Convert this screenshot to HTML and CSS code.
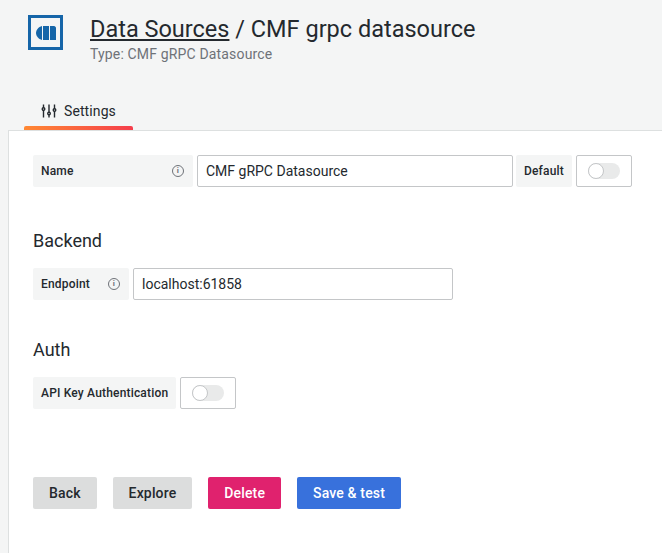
FILE: index.html
```html
<!DOCTYPE html>
<html lang="en">

<head>
    <meta charset="UTF-8">
    <title>CMF grpc datasource</title>
    <link rel="stylesheet" href="styles.css">
</head>

<body>
    <div class="header">
        <div class="header-top">
            <div class="logo">
                <svg width="20" height="14" viewBox="0 0 20 14">
                    <path d="M6 0C2.500 1 0 4 0 7s2.500 6 6 7z" fill="#1565a8"/>
                    <rect x="7" y="0" width="6" height="14" fill="#1565a8"/>
                    <path d="M14 0h4c1 0 2 1 2 2v12h-6z" fill="#1565a8"/>
                </svg>
            </div>
            <div class="titles">
                <h1 class="title"><a class="title-link" href="#">Data Sources</a> / CMF grpc datasource</h1>
                <div class="subtitle">Type: CMF gRPC Datasource</div>
            </div>
        </div>
        <div class="tab">
            <div class="tab-inner">
                <svg width="16" height="16" viewBox="0 0 16 16" fill="none" stroke="#24292e" stroke-width="1.4">
                    <path d="M2.500 1.500v13M8 1.500v13M13.500 1.500v13"/>
                    <circle cx="2.500" cy="6" r="1.300" fill="#f4f5f5"/>
                    <circle cx="8" cy="10.500" r="1.300" fill="#f4f5f5"/>
                    <circle cx="13.500" cy="7" r="1.300" fill="#f4f5f5"/>
                </svg>
                <span>Settings</span>
            </div>
            <div class="tab-bar"></div>
        </div>
    </div>

    <div class="content">
        <div class="row">
            <div class="label label-name">Name <span class="info">i</span></div>
            <div class="input input-name">CMF gRPC Datasource</div>
            <div class="label label-default">Default</div>
            <div class="switch"><div class="slider"><div class="knob"></div></div></div>
        </div>

        <h3 class="section">Backend</h3>
        <div class="row">
            <div class="label label-endpoint">Endpoint <span class="info">i</span></div>
            <div class="input input-endpoint">localhost:61858</div>
        </div>

        <h3 class="section section-auth">Auth</h3>
        <div class="row">
            <div class="label">API Key Authentication</div>
            <div class="switch"><div class="slider"><div class="knob"></div></div></div>
        </div>

        <div class="buttons">
            <button class="btn btn-grey">Back</button>
            <button class="btn btn-grey">Explore</button>
            <button class="btn btn-red">Delete</button>
            <button class="btn btn-blue">Save &amp; test</button>
        </div>
    </div>
</body>

</html>
```

FILE: styles.css
```css
body {
    margin: 0;
    height: 553px;
    overflow: hidden;
    background-color: #f4f5f5;
    font-family: Roboto, sans-serif;
    color: #24292e;
}

.header {
    height: 130px;
    padding-left: 24px;
    box-sizing: border-box;
    display: flex;
    flex-direction: column;
    justify-content: space-between;
}

.header-top {
    display: flex;
    padding-top: 15px;
    padding-left: 4px;
}

.logo {
    width: 35px;
    height: 35px;
    box-sizing: border-box;
    border: 3px solid #1565a8;
    display: flex;
    align-items: center;
    justify-content: center;
}

.titles {
    margin-left: 27px;
}

.title {
    margin: 0;
    font-size: 23.5px;
    font-weight: 400;
    line-height: 28px;
}

.title-link {
    color: #24292e;
}

.subtitle {
    font-size: 14px;
    letter-spacing: 0.16px;
    color: #6e7278;
    line-height: 18px;
    margin-top: 2px;
}

.tab {
    width: 109px;
    display: flex;
    flex-direction: column;
}

.tab-inner {
    height: 30px;
    padding-top: 2px;
    padding-left: 17px;
    display: flex;
    align-items: center;
    gap: 7px;
    font-size: 14px;
    letter-spacing: 0.1px;
}

.tab-bar {
    height: 4px;
    border-radius: 2px 2px 0 0;
    background-image: linear-gradient(90deg, #ff8833, #f53e4c);
}

.content {
    height: 423px;
    box-sizing: border-box;
    padding: 24px 0 0 24px;
    background-color: #fff;
    border-top: 1px solid #dde0e0;
    border-left: 1px solid #dde0e0;
    margin-left: 8px;
}

.row {
    display: flex;
    gap: 4px;
    height: 32px;
}

.label {
    background-color: #f4f5f5;
    border-radius: 2px;
    padding: 0 8px;
    display: flex;
    align-items: center;
    justify-content: space-between;
    font-size: 12px;
    font-weight: 500;
    letter-spacing: 0.18px;
}

.label-name {
    width: 160px;
    box-sizing: border-box;
    padding-right: 9px;
}

.label-default {
    width: 56px;
    box-sizing: border-box;
    margin-left: -1px;
}

.label-endpoint {
    width: 96px;
    box-sizing: border-box;
    padding-right: 9px;
}

.info {
    width: 12px;
    height: 12px;
    box-sizing: border-box;
    border: 1.5px solid #6e7278;
    border-radius: 50%;
    color: #6e7278;
    font-size: 8px;
    font-weight: 700;
    line-height: 9px;
    text-align: center;
}

.input {
    box-sizing: border-box;
    height: 32px;
    padding: 0 8px;
    background-color: #fff;
    border: 1px solid #c4c6c8;
    border-radius: 2px;
    font-size: 14px;
    line-height: 30px;
}

.input-name {
    width: 316px;
}

.input-endpoint {
    width: 320px;
}

.switch {
    width: 56px;
    height: 32px;
    box-sizing: border-box;
    border: 1px solid #c4c6c8;
    border-radius: 2px;
    display: flex;
    align-items: center;
    justify-content: center;
}

.slider {
    width: 32px;
    height: 16px;
    background-color: #e9eaea;
    border-radius: 8px;
}

.knob {
    width: 16px;
    height: 16px;
    box-sizing: border-box;
    background-color: #fff;
    border: 1.5px solid #c4c6c8;
    border-radius: 50%;
}

.section {
    height: 24px;
    margin: 42px 0 15px;
    font-size: 18px;
    font-weight: 400;
    line-height: 24px;
}

.section-auth {
    margin: 38px 0 15px;
}

.buttons {
    display: flex;
    gap: 16px;
    margin-top: 68px;
}

.btn {
    height: 32px;
    padding: 0 16px;
    border: none;
    border-radius: 2px;
    font-family: Roboto, sans-serif;
    font-size: 14px;
    font-weight: 500;
    letter-spacing: 0.15px;
}

.btn-grey {
    background-color: #dcdddd;
    color: #24292e;
}

.btn-red {
    background-color: #e0226e;
    color: #fff;
}

.btn-blue {
    background-color: #3871dc;
    color: #fff;
}
```
